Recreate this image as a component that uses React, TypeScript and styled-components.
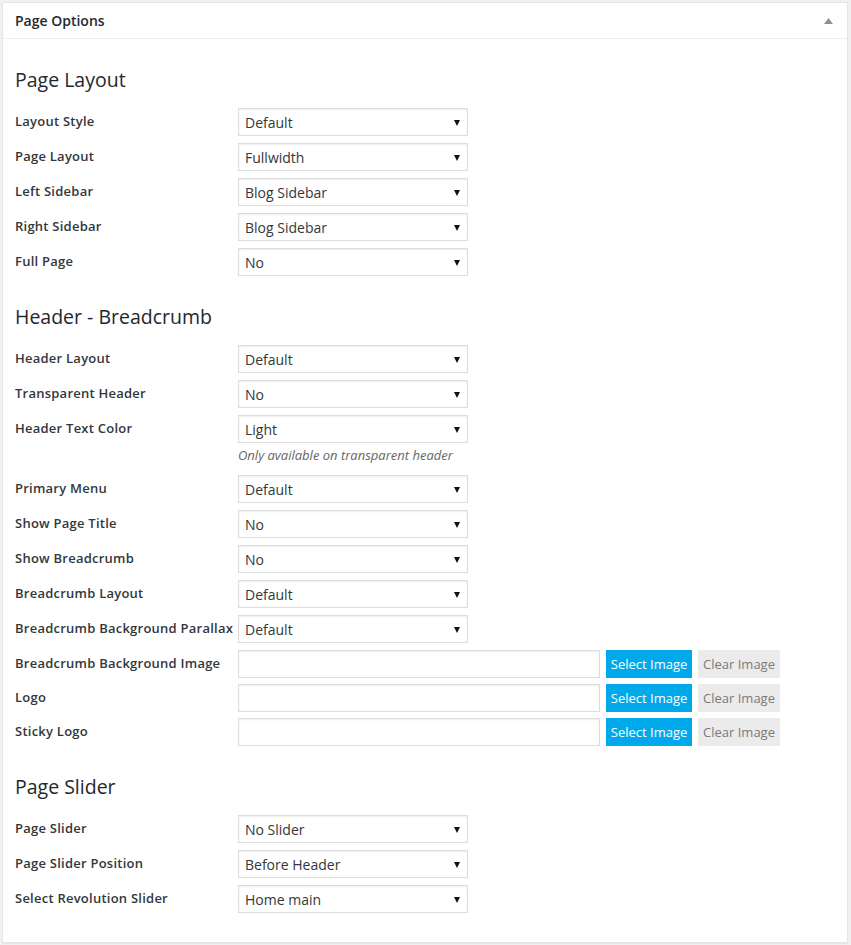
import styled, { createGlobalStyle } from 'styled-components'

const GlobalStyle = createGlobalStyle`
    html, body {
        margin: 0;
        padding: 0;
        background: #f1f1f1;
    }

    body {
        font-family: "Open Sans", "Noto Sans", sans-serif;
        color: #32373c;
    }
`

interface SelectField {
    label: string
    value: string
    note?: string
}

interface Section {
    title: string
    fields: SelectField[]
    images?: string[]
}

const sections: Section[] = [
    {
        title: 'Page Layout',
        fields: [
            { label: 'Layout Style', value: 'Default' },
            { label: 'Page Layout', value: 'Fullwidth' },
            { label: 'Left Sidebar', value: 'Blog Sidebar' },
            { label: 'Right Sidebar', value: 'Blog Sidebar' },
            { label: 'Full Page', value: 'No' },
        ],
    },
    {
        title: 'Header - Breadcrumb',
        fields: [
            { label: 'Header Layout', value: 'Default' },
            { label: 'Transparent Header', value: 'No' },
            {
                label: 'Header Text Color',
                value: 'Light',
                note: 'Only available on transparent header',
            },
            { label: 'Primary Menu', value: 'Default' },
            { label: 'Show Page Title', value: 'No' },
            { label: 'Show Breadcrumb', value: 'No' },
            { label: 'Breadcrumb Layout', value: 'Default' },
            { label: 'Breadcrumb Background Parallax', value: 'Default' },
        ],
        images: ['Breadcrumb Background Image', 'Logo', 'Sticky Logo'],
    },
    {
        title: 'Page Slider',
        fields: [
            { label: 'Page Slider', value: 'No Slider' },
            { label: 'Page Slider Position', value: 'Before Header' },
            { label: 'Select Revolution Slider', value: 'Home main' },
        ],
    },
]

function SelectRow({ field }: { field: SelectField }) {
    return (
        <Row>
            <Label>{field.label}</Label>
            <ControlColumn>
                <FakeSelect>{field.value}</FakeSelect>
                {field.note && <Note>{field.note}</Note>}
            </ControlColumn>
        </Row>
    )
}

function ImageRow({ label }: { label: string }) {
    return (
        <Row>
            <Label>{label}</Label>
            <Control>
                <TextInput />
                <SelectButton>Select Image</SelectButton>
                <ClearButton>Clear Image</ClearButton>
            </Control>
        </Row>
    )
}

function App() {
    return (
        <>
            <GlobalStyle />
            <Page>
                <Panel>
                    <PanelHeader>
                        <PanelTitle>Page Options</PanelTitle>
                        <svg width="9" height="6" viewBox="0 0 9 6">
                            <polygon points="4.5,0 9,6 0,6" fill="#8c9299" />
                        </svg>
                    </PanelHeader>
                    <PanelBody>
                        {sections.map((section) => (
                            <SectionBlock key={section.title}>
                                <SectionTitle>{section.title}</SectionTitle>
                                <Fields>
                                    {section.fields.map((field) => (
                                        <SelectRow key={field.label} field={field} />
                                    ))}
                                    {section.images && (
                                        <ImageGroup>
                                            {section.images.map((label) => (
                                                <ImageRow key={label} label={label} />
                                            ))}
                                        </ImageGroup>
                                    )}
                                </Fields>
                            </SectionBlock>
                        ))}
                    </PanelBody>
                </Panel>
            </Page>
        </>
    )
}

const Page = styled.div`
    width: 851px;
    height: 945px;
    padding: 2px;
    box-sizing: border-box;
`

const Panel = styled.div`
    width: 846px;
    height: 941px;
    box-sizing: border-box;
    background: #fff;
    border: 1px solid #e5e5e5;
    box-shadow: 0 1px 1px rgba(0, 0, 0, 0.04);
`

// Header

const PanelHeader = styled.div`
    height: 36px;
    box-sizing: border-box;
    padding: 0 14px 0 12px;

    display: flex;
    align-items: center;
    justify-content: space-between;

    border-bottom: 1px solid #eee;
`

const PanelTitle = styled.h2`
    margin: 0;
    font-size: 14px;
    font-weight: 600;
    color: #23282d;
    line-height: 1.4;
`

// Body

const PanelBody = styled.div`
    padding: 27px 12px 0 12px;

    display: flex;
    flex-direction: column;
    gap: 27px;
`

const SectionBlock = styled.section`
    display: flex;
    flex-direction: column;
    gap: 14px;
`

const SectionTitle = styled.h3`
    margin: 0;
    font-size: 19.5px;
    line-height: 28px;
    font-weight: 400;
    color: #23282d;
`

const Fields = styled.div`
    display: flex;
    flex-direction: column;
    gap: 7px;
`

const ImageGroup = styled.div`
    display: flex;
    flex-direction: column;
    gap: 6px;
`

const Row = styled.div`
    display: flex;
    align-items: flex-start;
`

const Label = styled.label`
    flex: 0 0 223px;
    height: 28px;
    box-sizing: border-box;
    padding-bottom: 2px;

    display: flex;
    align-items: center;

    font-size: 13px;
    font-weight: 600;
    letter-spacing: 0.24px;
    color: #32373c;
    white-space: nowrap;
`

const ControlColumn = styled.div`
    display: flex;
    flex-direction: column;
`

const Control = styled.div`
    display: flex;
    gap: 6px;
`

const FakeSelect = styled.div`
    position: relative;
    width: 230px;
    height: 28px;
    box-sizing: border-box;
    padding: 0 24px 0 6px;

    display: flex;
    align-items: center;

    border: 1px solid #ddd;
    background: #fff;
    box-shadow: inset 0 1px 2px rgba(0, 0, 0, 0.07);

    font-size: 14px;
    color: #32373c;

    &::after {
        content: '';
        position: absolute;
        right: 7px;
        top: 11px;
        border-left: 3.5px solid transparent;
        border-right: 3.5px solid transparent;
        border-top: 6px solid #111;
    }
`

const Note = styled.p`
    margin: 0;
    padding: 3px 0 4px 0;
    line-height: 18px;

    font-size: 13px;
    font-style: italic;
    color: #666;
`

const TextInput = styled.div`
    width: 362px;
    height: 28px;
    box-sizing: border-box;

    border: 1px solid #ddd;
    background: #fff;
    box-shadow: inset 0 1px 2px rgba(0, 0, 0, 0.07);
`

const ButtonBase = styled.button`
    height: 28px;
    padding: 0;
    border: none;
    border-radius: 0;

    font-family: inherit;
    font-size: 13px;
    line-height: 28px;
    cursor: pointer;
`

const SelectButton = styled(ButtonBase)`
    width: 86px;
    background: #00aaea;
    color: #fff;
`

const ClearButton = styled(ButtonBase)`
    width: 82px;
    background: #ebebeb;
    color: #7a7a7a;
`

export default App
